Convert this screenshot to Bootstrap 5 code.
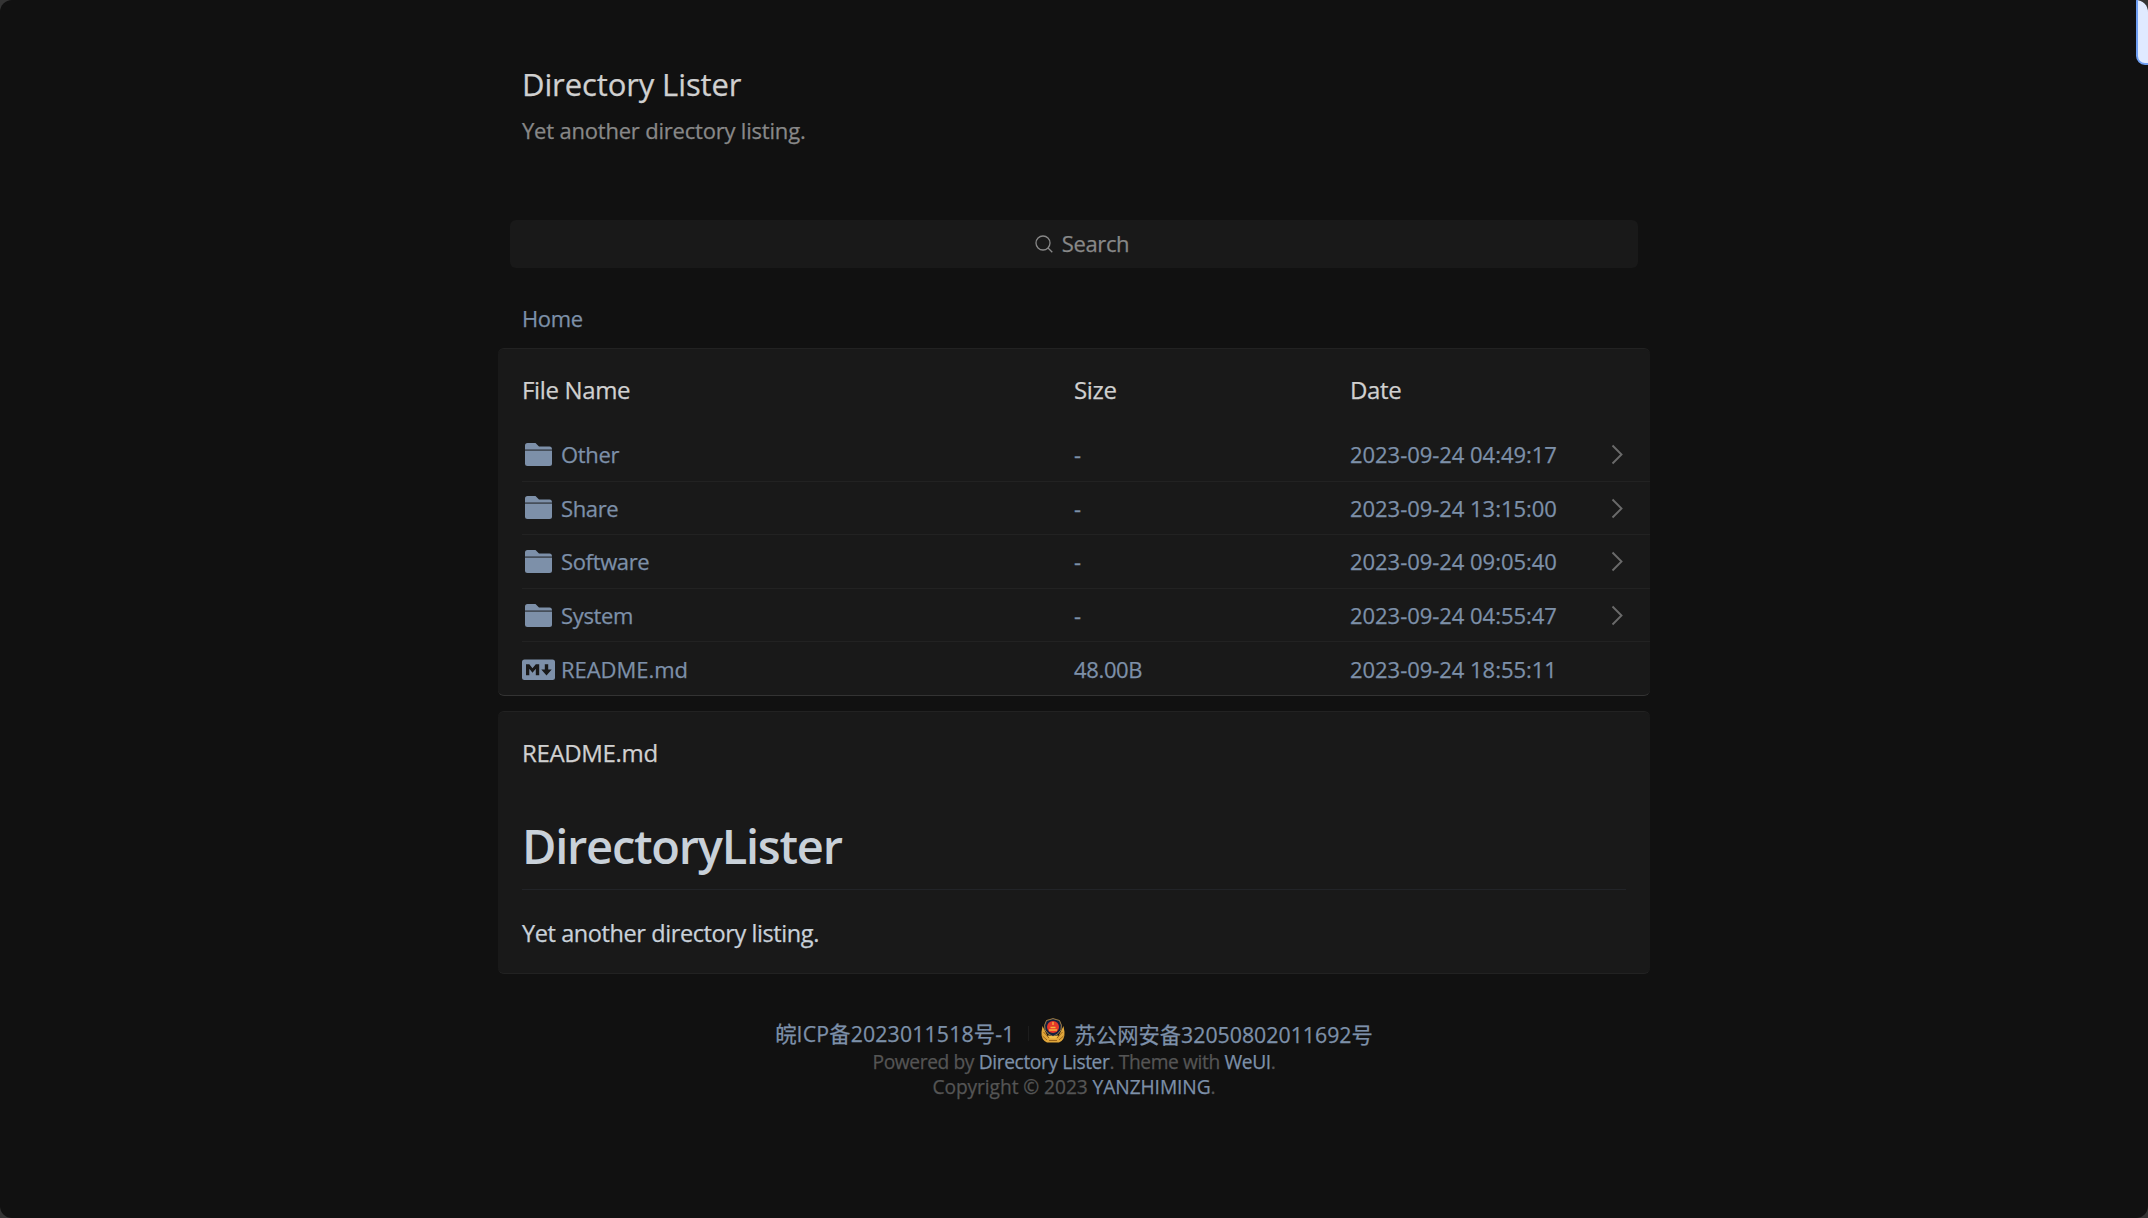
<!DOCTYPE html>
<html lang="zh">
<head>
<meta charset="utf-8">
<meta name="viewport" content="width=device-width, initial-scale=1">
<title>Directory Lister</title>
<link rel="stylesheet" href="https://cdn.jsdelivr.net/npm/bootstrap@5.3.0/dist/css/bootstrap.min.css">
<style>
html{background:#343434;height:100%}
body{background:#111;color:#d0d0d0;font-family:"Open Sans","Noto Sans CJK SC",sans-serif;font-size:22px;line-height:32px;border-radius:12px;height:1218px;overflow:hidden;letter-spacing:-.35px;-webkit-text-stroke:.25px currentColor}
a{color:#7d90a9;text-decoration:none}
.page{width:1152px}
.site-head{padding:64px 24px 74px}
.site-head h1{font-size:31px;line-height:40px;margin:0 0 10px;font-weight:400;letter-spacing:-.11px}
.site-head p{color:#888;letter-spacing:-.2px}
.search{height:48px;margin:0 12px;background:#191919;border-radius:6px;color:#888;gap:9px;padding-left:16px}
.search span{margin-bottom:2px}
.crumb{padding:32px 24px 12px;line-height:36px}
.panel{background:#191919;border:0 solid #222;border-width:1px 0;border-radius:6px}
.listing{border-bottom-color:#333;height:348px}
.panel-head{height:79px;padding:2px 0 0 24px;font-size:24px;letter-spacing:-.35px}
.panel-head .row,.entry .row{width:1104px}
.entry{height:53.6px;margin-left:24px;border-bottom:1px solid #222;color:#7d90a9;position:relative}
.entry:last-child{border:0}
.stamp{letter-spacing:-.04px}
.ico{width:33px;height:33px;margin-right:6px}
.chev{position:absolute;right:26px;top:16px}
.readme{margin-top:15px;height:263px}
.readme h2{font-size:47px;font-weight:600;line-height:58px;margin:26px 24px 0;height:73px;border-bottom:1px solid #222428;color:#c9d1d9;letter-spacing:-1.25px;-webkit-text-stroke:0}
.readme p{margin:27px 24px 0;font-size:23.5px;color:#c9d1d9;letter-spacing:-.41px}
.foot{margin-top:44px;font-size:19.2px;line-height:25px;color:#555;letter-spacing:-.38px}
.copy{letter-spacing:-.08px}
.beian{font-size:21.3px;letter-spacing:0;line-height:28px}
.icp{letter-spacing:.14px}
.vr-thin{width:1px;height:15px;background:#1d1d1d;margin:0 12px 0 13px}
.emblem{margin-bottom:6px}
.gongan{margin:1px 0 -1px 10px}
.side-tab{position:absolute;top:-8px;right:-12px;width:24px;height:73px;background:#e0eaff;border:2px solid #6f9ff2;border-radius:9px}
</style>
<script src="https://cdn.jsdelivr.net/npm/bootstrap@5.3.0/dist/js/bootstrap.bundle.min.js"></script>
</head>
<body class="position-relative">
<svg class="d-none">
<symbol id="folder" viewBox="0 0 33 33"><path d="M3 11.500V7.500Q3 5 5.500 5H13.500L17 8.500H27.500Q30 8.500 30 11.500Z"/><path d="M3 12.800H30V25.500Q30 28 27.500 28H5.500Q3 28 3 25.500Z"/><path d="M3 11.300H30V13H3Z" opacity=".28"/></symbol>
<symbol id="md" viewBox="0 0 33 33"><path fill-rule="evenodd" d="M2.500 6.500H30.500Q33 6.500 33 9V24.500Q33 27 30.500 27H2.500Q0 27 0 24.500V9Q0 6.500 2.500 6.500ZM4 11.200V22.300H7.300V15.800L10.500 19.800L13.800 15.800V22.300H17.200V11.200H13.800L10.500 15.200L7.300 11.200ZM22.800 11.200V16.600H19.300L24.500 22.500L29.700 16.600H26.200V11.200Z"/></symbol>
<symbol id="chev" viewBox="0 0 13 21"><path d="M1.500 1.500L10.500 10.500L1.500 19.500" fill="none" stroke="#6a6a6a" stroke-width="1.900"/></symbol>
</svg>
<main class="page mx-auto">
<header class="site-head"><h1>Directory Lister</h1><p class="mb-0">Yet another directory listing.</p></header>
<div class="search d-flex align-items-center justify-content-center"><svg width="18" height="18" viewBox="0 0 18 18" fill="none" stroke="#888" stroke-width="1.300"><circle cx="8" cy="8" r="7"/><path d="M13 13L17.300 17.300"/></svg><span>Search</span></div>
<nav class="crumb"><a href="#">Home</a></nav>
<section class="panel listing">
<div class="panel-head"><div class="row g-0 h-100 align-items-center"><div class="col-6">File Name</div><div class="col-3">Size</div><div class="col-3">Date</div></div></div>
<a href="#" class="entry d-flex align-items-center"><div class="row g-0 align-items-center"><div class="col-6 d-flex align-items-center"><svg class="ico" fill="#7d90a9"><use href="#folder"/></svg>Other</div><div class="col-3">-</div><div class="col-3 stamp">2023-09-24 04:49:17</div></div><svg class="chev" width="13" height="21"><use href="#chev"/></svg></a>
<a href="#" class="entry d-flex align-items-center"><div class="row g-0 align-items-center"><div class="col-6 d-flex align-items-center"><svg class="ico" fill="#7d90a9"><use href="#folder"/></svg>Share</div><div class="col-3">-</div><div class="col-3 stamp">2023-09-24 13:15:00</div></div><svg class="chev" width="13" height="21"><use href="#chev"/></svg></a>
<a href="#" class="entry d-flex align-items-center"><div class="row g-0 align-items-center"><div class="col-6 d-flex align-items-center"><svg class="ico" fill="#7d90a9"><use href="#folder"/></svg>Software</div><div class="col-3">-</div><div class="col-3 stamp">2023-09-24 09:05:40</div></div><svg class="chev" width="13" height="21"><use href="#chev"/></svg></a>
<a href="#" class="entry d-flex align-items-center"><div class="row g-0 align-items-center"><div class="col-6 d-flex align-items-center"><svg class="ico" fill="#7d90a9"><use href="#folder"/></svg>System</div><div class="col-3">-</div><div class="col-3 stamp">2023-09-24 04:55:47</div></div><svg class="chev" width="13" height="21"><use href="#chev"/></svg></a>
<a href="#" class="entry d-flex align-items-center"><div class="row g-0 align-items-center"><div class="col-6 d-flex align-items-center stamp"><svg class="ico" fill="#7d90a9"><use href="#md"/></svg>README.md</div><div class="col-3">48.00B</div><div class="col-3 stamp">2023-09-24 18:55:11</div></div></a>
</section>
<section class="panel readme">
<div class="panel-head d-flex align-items-center">README.md</div>
<h2>DirectoryLister</h2>
<p>Yet another directory listing.</p>
</section>
<footer class="foot text-center">
<div class="beian d-flex justify-content-center align-items-center"><a href="#" class="icp">皖ICP备2023011518号-1</a><i class="vr-thin"></i>
<svg class="emblem" width="24" height="25" viewBox="0 0 24 25"><path d="M1.500 8L.5 14Q0 22 6 24.500H18Q24 22 23.500 14L22.500 8L17.500 18H6.500Z" fill="#e0a63a"/><path d="M2.500 14L8 20M21.500 14L16 20M1.500 18L6 22M22.500 18L18 22M8 22.500H16" stroke="#9c6418"/><path d="M12 .6Q15 1.500 18.500 2.500Q21.500 7 20 12Q17 17 12 18.500Q7 17 4 12Q2.500 7 5.500 2.500Q9 1.500 12 .6Z" fill="#15213f" stroke="#c99c4c" stroke-width=".8"/><circle cx="12" cy="9" r="6" fill="#e6392a"/><path d="M8 12H16M9.500 9.500H14.500M12 4V7" stroke="#f6b33c" stroke-width="1.300"/><path d="M7 17Q12 19.500 17 17L15 20.500H9Z" fill="#f3c04b"/></svg>
<a href="#" class="gongan">苏公网安备32050802011692号</a></div>
<div>Powered by <a href="#">Directory Lister</a>. Theme with <a href="#">WeUI</a>.</div>
<div class="copy">Copyright © 2023 <a href="#">YANZHIMING</a>.</div>
</footer>
</main>
<div class="side-tab"></div>
</body>
</html>
